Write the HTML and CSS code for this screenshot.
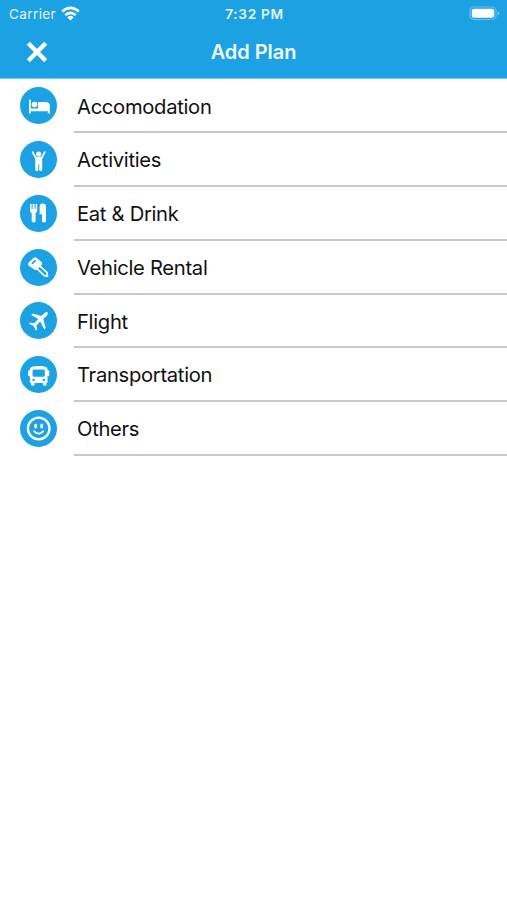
FILE: index.html
```html
<!DOCTYPE html>
<html lang="en">
<head>
<meta charset="utf-8">
<title>Add Plan</title>
<link rel="stylesheet" href="styles.css">
</head>
<body>
<header class="header">
  <div class="status">
    <div class="carrier"><span>Carrier</span>
      <svg class="wifi" viewBox="0 0 20 15"><g fill="none" stroke="#fff" stroke-width="2.8"><path d="M1.3 5.3Q10 -2 18.7 5.3"/><path d="M4.5 9.2Q10 4.4 15.5 9.2"/></g><path fill="#fff" d="M6.7 11.4Q10 8.5 13.3 11.4L10 14.8z"/></svg>
    </div>
    <time class="time">7:32 PM</time>
    <svg class="battery" viewBox="0 0 31 15"><rect x="1" y="1" width="26" height="12.5" rx="3.8" fill="none" stroke="#68bfee" stroke-width="1.2"/><rect x="2.8" y="2.8" width="22.4" height="8.9" rx="2" fill="#fff"/><path d="M28.6 5.2Q31.8 7.2 28.6 9.3z" fill="#83cbf1"/></svg>
  </div>
  <div class="nav">
    <button class="close" aria-label="Close"><svg viewBox="0 0 22 22"><path d="M2.3 2.3L19.7 19.7M19.7 2.3L2.3 19.7" stroke="#fff" stroke-width="4.4"/></svg></button>
    <h1 class="title">Add Plan</h1>
  </div>
</header>
<ul class="list">
  <li class="row"><svg class="icon" viewBox="0 0 37 37"><circle class="disc" cx="18.5" cy="18.5" r="18.5"/><path d="M9 12.7h1.8v8.8H18V14.9h7.6q4.2 0 4.2 4.2v7.4h-2v-2.3h-17v2.3H9z"/><circle cx="14.5" cy="17.5" r="2.8"/></svg><span class="label">Accomodation</span></li>
  <li class="row"><svg class="icon" viewBox="0 0 37 37"><circle class="disc" cx="18.5" cy="18.5" r="18.5"/><circle cx="18.7" cy="13.1" r="2.6"/><path d="M11.6 10.9q1.1-1.4 2.1.3l2.7 4.7h4.7l2.6-4.7q1-1.7 2.1-.3L22.2 18v11q0 1-1.5 1t-1.5-1v-5.7h-.9V29q0 1-1.5 1t-1.5-1V18z"/></svg><span class="label">Activities</span></li>
  <li class="row"><svg class="icon" viewBox="0 0 37 37"><circle class="disc" cx="18.5" cy="18.5" r="18.5"/><path d="M10 9.3q.8-1 1.6 0v4.6h1V9.3q1-1 2 0v4.6h1V9.3q.8-1 1.6 0v6.2q0 2-1.6 2.5v8q0 1.4-1.9 1.4T11.7 26v-8q-1.7-.5-1.7-2.5zM19.6 11.7q0-3.2 3-3.2 3.4 0 3.4 3.2V26q0 1.4-2 1.4T22 26v-6.7h-2.4z"/></svg><span class="label">Eat &amp; Drink</span></li>
  <li class="row"><svg class="icon" viewBox="0 0 37 37"><circle class="disc" cx="18.5" cy="18.5" r="18.5"/><path d="M8.3 16.2q-.7-1.3.2-2.4L13.5 9q1.4-1.1 2.9-.3l5.1 4.4q.9 1.1.4 2.5l-4.6 4.9q-1.3 1.1-2.6.2z"/><path d="M19.2 16.3l7.8 7.3.5 3.5-3.2-.4-7.5-7.4z" fill="none" stroke="#fff" stroke-width="1.7" stroke-linejoin="round"/><path d="M12.5 14.2l2.5-2.4" stroke="#1ca1e3" stroke-width="1.8" stroke-linecap="round"/></svg><span class="label">Vehicle Rental</span></li>
  <li class="row"><svg class="icon" viewBox="0 0 37 37"><circle class="disc" cx="18.5" cy="18.5" r="18.5"/><path d="M27.5 10.1q-1.3-.7-3 .8l-3.3 3.2-8.5-2.6-1.4 1.4 7 4.1-4 4.2-4.1-.8-1.2 1.3 4.6 2.3 2.3 4.6 1.3-1.2-.8-4 3.8-3.8 4.1 7.9 1.4-1.4-2.4-9.2 3.6-3.5q1.6-2 .6-3.3z"/></svg><span class="label">Flight</span></li>
  <li class="row"><svg class="icon" viewBox="0 0 37 37"><circle class="disc" cx="18.5" cy="18.5" r="18.5"/><path d="M9.9 13q0-3 8.8-3t8.8 3v1.3h.8q1 0 1 1v4q0 1-1 1h-.8V26q0 1-1 1v1.4q0 1.3-1.8 1.3t-1.8-1.3V27h-8.4v1.4q0 1.3-1.8 1.3t-1.8-1.3V27q-1 0-1-1v-5.7h-.8q-1 0-1-1v-4q0-1 1-1h.8z"/><rect class="cut" x="12.6" y="13.5" width="12.2" height="7.2" rx="1.2"/><circle class="cut" cx="13.6" cy="23.9" r="1.2"/><circle class="cut" cx="23.8" cy="23.9" r="1.2"/></svg><span class="label">Transportation</span></li>
  <li class="row"><svg class="icon" viewBox="0 0 37 37"><circle class="disc" cx="18.5" cy="18.5" r="18.5"/><circle cx="18.7" cy="18.5" r="10.8" fill="none" stroke="#fff" stroke-width="2.3"/><ellipse cx="15.7" cy="16" rx="1.5" ry="2.6"/><ellipse cx="21.7" cy="16" rx="1.5" ry="2.6"/><path d="M14.3 21.3q4.4 4.6 8.8 0" fill="none" stroke="#fff" stroke-width="1.9" stroke-linecap="round"/></svg><span class="label">Others</span></li>
</ul>
</body>
</html>
```
FILE: styles.css
```css
* { box-sizing: border-box; }
body { margin: 0; min-height: 900px; background: #fff; color: #111; font-family: Inter, "Liberation Sans", sans-serif; }
.header { height: 79px; background: #1ca1e3; color: #fff; border-bottom: 1px solid #70cdf3; }
.status { height: 27px; padding: 0 7px 0 9px; display: grid; grid-template-columns: 1fr auto 1fr; align-items: center; }
.carrier { display: flex; align-items: center; gap: 6px; font-size: 13.5px; letter-spacing: 0.4px; color: #e4f5fd; }
.wifi { width: 19px; height: 15px; margin: -1px 0 0 -1px; }
.time { font-size: 13.7px; font-weight: 600; letter-spacing: 0.65px; color: #e4f5fd; }
.battery { width: 31px; height: 15px; justify-self: end; }
.nav { height: 50px; padding: 0 26px; display: grid; grid-template-columns: 1fr auto 1fr; align-items: center; }
.close { width: 22px; height: 22px; padding: 0; border: 0; background: none; }
.close svg { display: block; width: 22px; height: 22px; }
.title { margin: 0; font-size: 20px; font-weight: 600; letter-spacing: -0.05px; color: #edf9ff; }
.list { margin: 0; padding: 0.7px 0 0; list-style: none; }
.row { height: 53.75px; padding-left: 20px; display: flex; align-items: center; gap: 17px; }
.icon { width: 37px; height: 37px; margin-bottom: 1.6px; flex: none; fill: #fff; }
.disc, .cut { fill: #1ca1e3; }
.label { flex: 1; height: 100%; padding-left: 3px; border-bottom: 2px solid #c8c8c8; font-size: 20.2px; letter-spacing: -0.3px; line-height: 54.7px; }
```
